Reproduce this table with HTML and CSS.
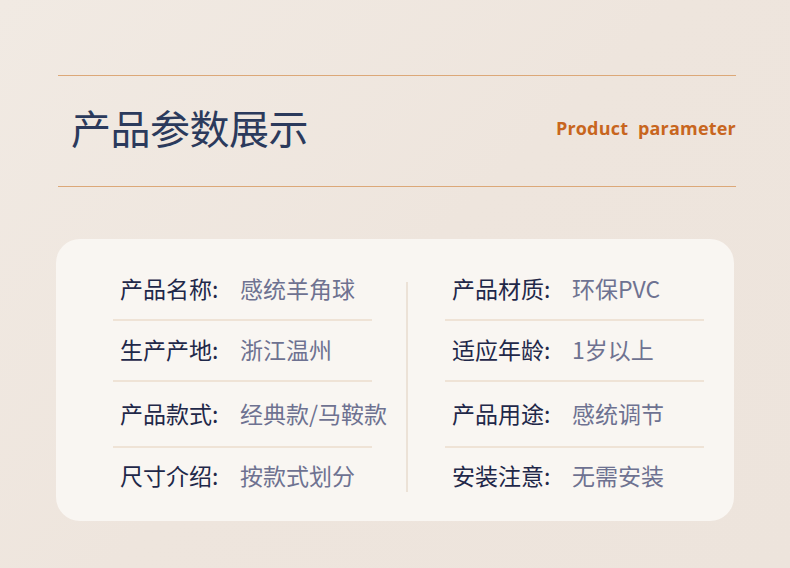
FILE: index.html
```html
<!DOCTYPE html>
<html lang="zh">
<head>
<meta charset="utf-8">
<link rel="stylesheet" href="styles.css">
</head>
<body>
<div class="page">
  <header class="head">
    <h1 class="title">产品参数展示</h1>
    <div class="subtitle">Product&nbsp; parameter</div>
  </header>
  <section class="card">
    <div class="col">
      <div class="row"><span class="label">产品名称:</span><span class="value">感统羊角球</span></div>
      <div class="row"><span class="label">生产产地:</span><span class="value">浙江温州</span></div>
      <div class="row tall"><span class="label">产品款式:</span><span class="value">经典款/马鞍款</span></div>
      <div class="row last"><span class="label">尺寸介绍:</span><span class="value">按款式划分</span></div>
    </div>
    <div class="divider"></div>
    <div class="col">
      <div class="row"><span class="label">产品材质:</span><span class="value">环保PVC</span></div>
      <div class="row"><span class="label">适应年龄:</span><span class="value">1岁以上</span></div>
      <div class="row tall"><span class="label">产品用途:</span><span class="value">感统调节</span></div>
      <div class="row last"><span class="label">安装注意:</span><span class="value">无需安装</span></div>
    </div>
  </section>
</div>
</body>
</html>
```

FILE: styles.css
```css
* { box-sizing: border-box; }
html, body { margin: 0; padding: 0; }
body {
  width: 790px;
  height: 568px;
  overflow: hidden;
  background: linear-gradient(135deg, #f1eae3 0%, #eee5dd 50%, #ede4dc 100%);
  font-family: "Noto Sans CJK SC", "Noto Sans", sans-serif;
}
.page {
  padding: 75px 54px 0 58px;
}
.head {
  height: 112px;
  border-top: 1px solid #dca878;
  border-bottom: 1px solid #dca878;
  display: flex;
  align-items: center;
  justify-content: space-between;
  padding: 0 0 8px 13px;
}
.title {
  margin: 0;
  font-weight: 400;
  font-size: 40px;
  line-height: 1;
  color: #2b3a5c;
  letter-spacing: -0.5px;
}
.subtitle {
  font-family: "Open Sans", "Noto Sans", sans-serif;
  font-weight: 700;
  font-size: 18px;
  color: #c8661e;
  letter-spacing: 0.2px;
  margin-top: 2px;
}
.card {
  margin: 52px 2px 0 -2px;
  height: 282px;
  background: #f9f6f2;
  border-radius: 24px;
  display: flex;
  padding: 21px 0 0 57px;
}
.col {
  width: 259px;
  display: flex;
  flex-direction: column;
  flex-shrink: 0;
}
.divider {
  width: 2px;
  height: 210px;
  margin: 22px 37px 0 34px;
  background: #ece2d7;
}
.row {
  height: 61px;
  display: flex;
  align-items: center;
  padding: 0 0 4px 7px;
  border-bottom: 2px solid #efe3d6;
  white-space: nowrap;
}
.row.tall { height: 66px; padding-bottom: 2px; }
.row.last { border-bottom: none; padding-bottom: 8px; }
.label {
  width: 120px;
  flex-shrink: 0;
  font-size: 23px;
  color: #1f2849;
}
.value {
  font-size: 23px;
  color: #6e7291;
}
```
